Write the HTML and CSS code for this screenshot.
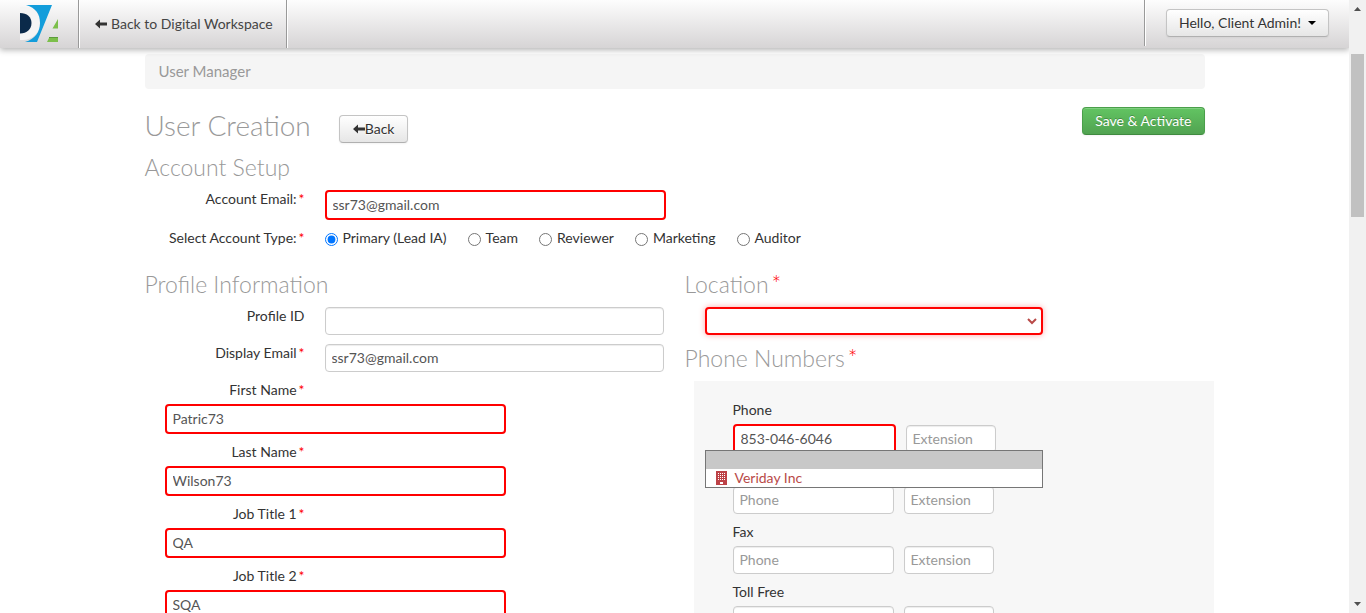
FILE: index.html
```html
<!DOCTYPE html>
<html lang="en">
<head>
<meta charset="utf-8">
<title>User Manager</title>
<link rel="stylesheet" href="styles.css">
</head>
<body>
<div class="window">
  <div class="page">
    <header class="topbar">
      <a class="logo" href="#" aria-label="Home">
        <svg width="40" height="38" viewBox="19 5 40 38" aria-hidden="true">
          <path d="M20 7c12-2 20 6 20 16s-8 18-20 17z" fill="#f4f4f4"/>
          <path d="M26 5h26L37 42H25c10-3 15-10 15-19S36 8 26 5z" fill="#139ddb"/>
          <path d="M20 13c7 0 11.500 4 11.500 10S27 33.500 20 33.500z" fill="#0b2a4a"/>
          <path d="M58 19v9.500h-5.500z M49.500 37h8.500v5H47z" fill="#7cbf4b"/>
          <path d="M49 37.500h9" stroke="#5d9c3c" stroke-width="1"/>
        </svg>
      </a>
      <a class="back-link" href="#">
        <svg class="arrow" viewBox="0 0 12 10" aria-hidden="true"><path d="M0 5l5-4.500v3h7v3H5v3z"/></svg>
        Back to Digital Workspace
      </a>
      <div class="account">
        <button class="btn account-btn" type="button">Hello, Client Admin!<span class="caret"></span></button>
      </div>
    </header>

    <main class="container">
      <nav class="breadcrumb" aria-label="Breadcrumb">User Manager</nav>
      <div class="title-row">
        <h1 class="title">User Creation</h1>
        <button class="btn back-btn" type="button"><svg class="arrow" viewBox="0 0 12 10" aria-hidden="true"><path d="M0 5l5-4.500v3h7v3H5v3z"/></svg>Back</button>
        <button class="btn btn-success" type="button">Save &amp; Activate</button>
      </div>

      <form class="form">
        <section>
          <h2 class="heading">Account Setup</h2>
          <div class="field account-field">
            <label class="label" for="account-email">Account Email:<span class="req">*</span></label>
            <input class="input invalid" id="account-email" type="text" value="ssr73@gmail.com">
          </div>
          <div class="field type-field" role="radiogroup" aria-labelledby="type-label">
            <span class="label" id="type-label">Select Account Type:<span class="req">*</span></span>
            <div class="radios">
              <label class="radio"><input type="radio" name="type" checked>Primary (Lead IA)</label>
              <label class="radio"><input type="radio" name="type">Team</label>
              <label class="radio"><input type="radio" name="type">Reviewer</label>
              <label class="radio"><input type="radio" name="type">Marketing</label>
              <label class="radio"><input type="radio" name="type">Auditor</label>
            </div>
          </div>
        </section>

        <div class="columns">
          <section>
            <h2 class="heading">Profile Information</h2>
            <div class="field profile-field">
              <label class="label" for="profile-id">Profile ID</label>
              <input class="input" id="profile-id" type="text">
            </div>
            <div class="field profile-field">
              <label class="label" for="display-email">Display Email<span class="req">*</span></label>
              <input class="input" id="display-email" type="text" value="ssr73@gmail.com">
            </div>
            <div class="names">
              <div class="stacked">
                <label class="label" for="first-name">First Name<span class="req">*</span></label>
                <input class="input invalid" id="first-name" type="text" value="Patric73">
              </div>
              <div class="stacked">
                <label class="label" for="last-name">Last Name<span class="req">*</span></label>
                <input class="input invalid" id="last-name" type="text" value="Wilson73">
              </div>
              <div class="stacked">
                <label class="label" for="job-1">Job Title 1<span class="req">*</span></label>
                <input class="input invalid" id="job-1" type="text" value="QA">
              </div>
              <div class="stacked">
                <label class="label" for="job-2">Job Title 2<span class="req">*</span></label>
                <input class="input invalid" id="job-2" type="text" value="SQA">
              </div>
            </div>
          </section>

          <section>
            <h2 class="heading" id="location-label">Location<span class="req">*</span></h2>
            <div class="location">
              <select class="select" aria-labelledby="location-label"><option></option><option>Veriday Inc</option></select>
              <svg class="chevron" viewBox="0 0 10 7" aria-hidden="true"><path d="M1 1l4 4 4-4"/></svg>
            </div>
            <h2 class="heading phones-heading">Phone Numbers<span class="req">*</span></h2>
            <div class="panel">
              <div class="phone">
                <label for="phone-1">Phone</label>
                <div class="phone-row">
                  <input class="input number invalid" id="phone-1" type="text" value="853-046-6046">
                  <input class="input ext" type="text" placeholder="Extension" aria-label="Extension">
                </div>
              </div>
              <div class="phone unlabelled">
                <div class="phone-row">
                  <input class="input number" type="text" placeholder="Phone" aria-label="Phone">
                  <input class="input ext" type="text" placeholder="Extension" aria-label="Extension">
                </div>
              </div>
              <div class="phone">
                <label for="fax">Fax</label>
                <div class="phone-row">
                  <input class="input number" id="fax" type="text" placeholder="Phone">
                  <input class="input ext" type="text" placeholder="Extension" aria-label="Extension">
                </div>
              </div>
              <div class="phone">
                <label for="toll-free">Toll Free</label>
                <div class="phone-row">
                  <input class="input number" id="toll-free" type="text" placeholder="Phone">
                  <input class="input ext" type="text" placeholder="Extension" aria-label="Extension">
                </div>
              </div>
              <ul class="options" role="listbox" aria-labelledby="location-label">
                <li class="option active" role="option" aria-selected="true"></li>
                <li class="option" role="option" aria-selected="false">
                  <svg class="building" viewBox="0 0 11 14" aria-hidden="true">
                    <path d="M0 0h11v14H0z" fill="#bd4247"/>
                    <path d="M2 2.500h7M2 4.500h7M2 6.500h7M2 8.500h7" stroke="#fff" stroke-width="1" stroke-dasharray="1 1"/>
                    <path d="M4 11h3v2H4z" fill="#fff"/>
                  </svg>
                  Veriday Inc
                </li>
              </ul>
            </div>
          </section>
        </div>
      </form>
    </main>
  </div>

  <div class="scrollbar" aria-hidden="true">
    <svg class="scroll-arrow" viewBox="0 0 7 4"><path d="M0 4l3.500-4L7 4z"/></svg>
    <div class="track"><div class="thumb"></div></div>
    <svg class="scroll-arrow" viewBox="0 0 7 4"><path d="M0 0l3.500 4L7 0z"/></svg>
  </div>
</div>
</body>
</html>
```

FILE: styles.css
```css
* { box-sizing: border-box; }

body {
  margin: 0;
  background: #fff;
  color: #333;
  font: 14px/20px Lato, "Liberation Sans", sans-serif;
}

.window {
  display: grid;
  grid-template-columns: 1fr 17px;
  height: 100vh;
  overflow: hidden;
}

.page { min-width: 0; overflow: hidden; }

/* Top bar */
.topbar {
  position: relative;
  display: flex;
  height: 48px;
  background: linear-gradient(#fdfdfd, #d6d4d5);
  box-shadow: 0 2px 6px rgba(0, 0, 0, .3);
}

.logo {
  width: 79px;
  padding: 5px 0 0 19px;
  border-right: 1px solid #999;
}

.logo svg { display: block; }

.back-link {
  display: flex;
  align-items: center;
  gap: 4px;
  padding: 0 13px 0 15px;
  border-left: 1px solid #fff;
  border-right: 1px solid #999;
  box-shadow: 1px 0 #fff;
  color: #444;
  text-decoration: none;
}

.arrow { width: 12px; height: 10px; fill: #333; }

.account {
  margin-left: auto;
  height: 46px;
  padding: 9px 20px 0 21px;
  border-left: 1px solid #999;
  box-shadow: inset 1px 0 #fff;
}

.btn {
  display: inline-flex;
  align-items: center;
  justify-content: center;
  height: 28px;
  padding: 0 12px;
  border: 1px solid #c4c4c4;
  border-bottom-color: #b0b0b0;
  border-radius: 4px;
  background: linear-gradient(#fff, #e6e6e6);
  box-shadow: inset 0 1px rgba(255, 255, 255, .2), 0 1px 2px rgba(0, 0, 0, .05);
  color: #333;
  font: inherit;
  text-shadow: 0 1px 1px rgba(255, 255, 255, .75);
}

.caret {
  margin-left: 7px;
  border: 4px solid transparent;
  border-top-color: #000;
  border-bottom: 0;
}

/* Content */
.container {
  width: 1060px;
  max-width: 100%;
  margin: 0 auto;
  padding-top: 6px;
}

.breadcrumb {
  height: 35px;
  padding: 7px 14px;
  border-radius: 4px;
  background: #f5f5f5;
  color: #999;
  font-size: 15px;
}

.title-row {
  display: flex;
  align-items: flex-start;
  height: 58px;
  padding-top: 18px;
}

.title, .heading {
  margin: 0;
  color: #999;
  font-weight: 300;
}

.title { font-size: 28px; line-height: 36px; }

.back-btn { margin: 8px 0 0 28px; padding: 0 13px; }

.btn-success {
  margin-left: auto;
  border-color: #4a9f4a #4a9f4a #3f8a3f;
  background: linear-gradient(#62c462, #51a351);
  color: #fff;
  text-shadow: 0 -1px 0 rgba(0, 0, 0, .25);
}

.heading { height: 40px; font-size: 23px; line-height: 40px; }

.req { margin-left: 2px; color: #f00; }

.heading .req { margin-left: 3px; }

.field {
  display: grid;
  grid-template-columns: 160px 1fr;
  column-gap: 20px;
}

.label { line-height: 18px; text-align: right; }

.account-field { padding-top: 3px; }
.account-field .input { width: 341px; }

.type-field { padding-top: 8px; }
.type-field .label { line-height: 20px; }

.radios { display: flex; gap: 21px; }

.radio { display: flex; align-items: center; gap: 5px; }

.radio input { width: 13px; height: 13px; margin: 2px 0 0; }

.columns {
  display: grid;
  grid-template-columns: 540px 1fr;
  padding-top: 16px;
}

.input, .select {
  height: 28px;
  padding: 3px 6px 5px;
  border: 1px solid #ccc;
  border-radius: 4px;
  background: #fff;
  box-shadow: inset 0 1px 1px rgba(0, 0, 0, .075);
  color: #555;
  font: inherit;
}

.input::placeholder { color: #999; opacity: 1; }

.input.invalid { height: 30px; border: 2px solid #f00; box-shadow: none; }

.profile-field { padding-top: 3px; margin-bottom: 6px; }
.profile-field .input { width: 339px; }

.names { padding-top: 2px; }

.stacked {
  display: grid;
  grid-template-columns: 160px 1fr;
  row-gap: 4px;
  padding-bottom: 8px;
}

.stacked .label { line-height: 20px; }

.stacked .input { grid-column: 1 / -1; width: 341px; margin-left: 20px; }

.location {
  display: grid;
  align-items: center;
  width: 338px;
  margin: 3px 0 0 20px;
}

.select {
  grid-area: 1 / 1;
  appearance: none;
  width: 100%;
  border: 2px solid #f00;
  box-shadow: 0 0 6px rgba(255, 0, 0, .35);
}

.chevron {
  grid-area: 1 / 1;
  justify-self: end;
  width: 10px;
  height: 7px;
  margin-right: 6px;
  fill: none;
  stroke: #b94a48;
  stroke-width: 2;
  pointer-events: none;
}

.phones-heading { margin-top: 3px; }

.panel {
  position: relative;
  width: 520px;
  margin: 3px 0 0 9px;
  padding: 19px 39px;
  background: #f7f7f7;
}

.phone { display: grid; row-gap: 4px; padding-bottom: 8px; }
.phone.unlabelled { padding-top: 24px; }

.phone-row { display: flex; align-items: center; gap: 10px; }

.number { width: 161px; }
.number.invalid { width: 163px; }
.ext { width: 90px; }

/* Open list of the location drop-down, laid over the panel */
.options {
  position: absolute;
  top: 69px;
  left: 11px;
  width: 338px;
  margin: 0;
  padding: 0;
  border: 1px solid #767676;
  background: #fff;
  color: #b94a48;
  list-style: none;
}

.option {
  display: flex;
  align-items: center;
  gap: 8px;
  height: 18px;
  padding-left: 10px;
}

.option.active { background: #c8c8c8; }

.building { width: 11px; height: 14px; }

/* Window scrollbar */
.scrollbar {
  display: flex;
  flex-direction: column;
  align-items: center;
  padding: 7px 0;
  background: #f1f1f1;
}

.scroll-arrow { width: 7px; height: 4px; fill: #505050; }

.track { flex: 1; width: 13px; padding-top: 43px; }

.thumb { height: 163px; background: #c1c1c1; }
```
